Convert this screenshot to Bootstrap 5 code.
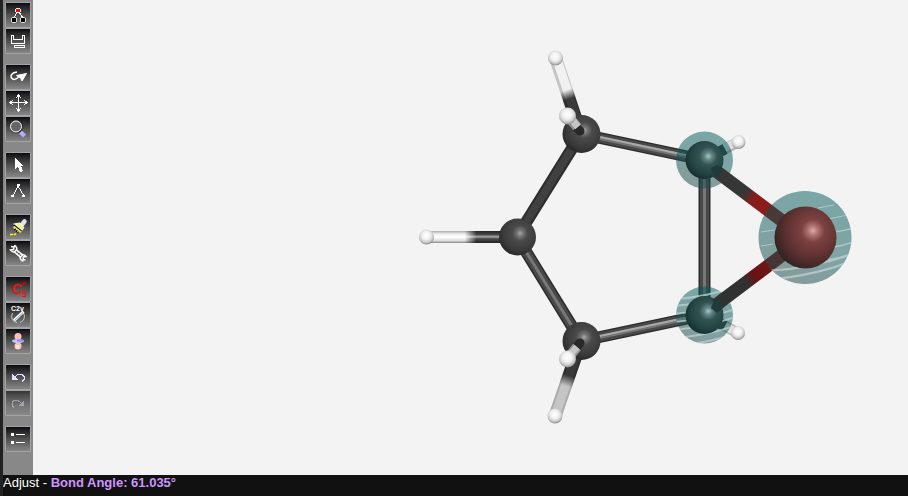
<!DOCTYPE html>
<html lang="en">
<head>
<meta charset="utf-8">
<meta name="viewport" content="width=device-width, initial-scale=1">
<title>Molecule editor</title>
<link href="https://cdn.jsdelivr.net/npm/bootstrap@5.3.0/dist/css/bootstrap.min.css" rel="stylesheet">
<style>
body{font-family:"Liberation Sans",Arial,sans-serif;background:#f3f3f3;border-left:3px solid #222}
.tool-strip{background:#888;padding:2px;gap:10px;width:30px}
.tool-btn{width:26px;height:26px;border:1px solid #a3a3a3;border-radius:1px;background:linear-gradient(#080810 0,#1e1e20 12%,#505050 50%,#7d7d7d 92%,#858585);line-height:0}
.tool-btn svg{width:24px;height:24px;fill:none;stroke:#fff;stroke-width:1}
.tool-btn:disabled{opacity:1;background:linear-gradient(#333 0,#505050 20%,#747474 60%,#888)}
.tool-btn:disabled svg{opacity:.45}
.status-line{background:#111;color:#fff;font-size:13px;line-height:16px;height:21px}
.status-line strong{color:#cf95ff}
.glyph{font-family:"Liberation Sans",Arial,sans-serif;stroke:none}
</style>
<script src="https://cdn.jsdelivr.net/npm/bootstrap@5.3.0/dist/js/bootstrap.bundle.min.js"></script>
</head>
<body class="vh-100 d-flex flex-column overflow-hidden">
<div class="d-flex flex-grow-1 overflow-hidden">
<nav class="tool-strip d-flex flex-column flex-shrink-0" aria-label="Tools">
  <div class="d-flex flex-column">
    <button type="button" class="tool-btn p-0" aria-label="Add fragment"><svg viewBox="1 1 24 24" shape-rendering="crispEdges"><path d="M12 10L9 16M14 10l4 6"/><path d="M11 6h4v1h1v3h-1v1h-4v-1h-1V7h1z" fill="#fff" stroke="none"/><path d="M11 7h4v3h-4z" fill="red" stroke="none"/><path d="M7 15h4v1h1v4h-1v1H7v-1H6v-4h1zM16 15h4v1h1v4h-1v1h-4v-1h-1v-4h1z" fill="#ddd" stroke="none"/><path d="M7 16h4v4H7zM16 16h4v4h-4z" fill="#000" stroke="none"/></svg></button>
    <button type="button" class="tool-btn p-0" aria-label="Add ring"><svg viewBox="1 1 24 24" shape-rendering="crispEdges"><path d="M6.500 7v8.500h13V7h-2v4h-9V7z"/><path d="M9.500 17.500h10v2h-10z"/></svg></button>
  </div>
  <div class="d-flex flex-column">
    <button type="button" class="tool-btn p-0" aria-label="Rotate"><svg viewBox="1 1 24 24"><path d="M12 8C7 8.500 5 11.500 6.500 14c2 2.500 4.500 1.500 7-1" stroke-width="1.500"/><path d="M11.500 11.500L21.500 9.500 17 17 15.500 14z" fill="#fff"/></svg></button>
    <button type="button" class="tool-btn p-0" aria-label="Translate"><svg viewBox="1 1 24 24" shape-rendering="crispEdges"><path d="M13.500 5v16M5 12.500h17M11 8l2.500-3L16 8M11 18l2.500 3 2.500-3M8 10l-3 2.500L8 15M19 10l3 2.500-3 2.500"/></svg></button>
    <button type="button" class="tool-btn p-0" aria-label="Zoom"><svg viewBox="1 1 24 24"><path d="M15.500 16l4 4" stroke="#b1b1ff" stroke-width="4"/><circle cx="11.500" cy="11" r="5.500" stroke="#222" stroke-width="1.500"/><circle cx="11" cy="10.500" r="5.500" fill="#666"/></svg></button>
  </div>
  <div class="d-flex flex-column">
    <button type="button" class="tool-btn p-0" aria-label="Select"><svg viewBox="1 1 24 24" shape-rendering="crispEdges"><path d="M10 6v11l3-3 2 6 3-1-2-5h3z" fill="#fff" stroke="none"/></svg></button>
    <button type="button" class="tool-btn p-0" aria-label="Adjust"><svg viewBox="1 1 24 24" shape-rendering="crispEdges"><path d="M13 8L8 18M13 8l6 10"/><path d="M12 6h3v2h-3zM6 17h3v2H6zM17 17h3v2h-3z" fill="#fff" stroke="none"/></svg></button>
  </div>
  <div class="d-flex flex-column">
    <button type="button" class="tool-btn p-0" aria-label="Clean structure"><svg viewBox="1 1 24 24"><path d="M17 10.500l2.500-3" stroke="#dce0ea" stroke-width="4.500" stroke-linecap="round"/><path d="M8.500 9.500l6-1 5 5-3.500 5-4-.5-3.500-4z" fill="#f5f5f5" stroke="none"/><path d="M8.500 11l8 6.500" stroke="#111" stroke-width="2"/><path d="M9 12.500l7 5.500M12.500 9.500l5 5.500" stroke="#fff12e" stroke-width="1.500"/><path d="M9.500 15l4 3.500" stroke="#111" stroke-width="2" stroke-dasharray="1.500 .7"/><path d="M5 20.500h5l1.500-1.500" stroke="#ffef00" stroke-width="1.500" stroke-dasharray="3 .5"/></svg></button>
    <button type="button" class="tool-btn p-0" aria-label="Optimize"><svg viewBox="1 1 24 24"><path d="M10 10.500l7 6" stroke="#fff" stroke-width="4.500"/><path d="M6 6.500l3 .5-.5 2.500L5.500 10c2 2.500 4 2.500 5.500.500 1.500-2 .500-4.500-2-5M20.500 20l-2.500-.5.5-2.500 2.500-.500c-2-2.500-4.500-2-5.500 0-1 2 1 5 3 4.500" stroke-width="1.500"/><path d="M11 11.500l5 4" stroke="#444" stroke-width="1.500" stroke-dasharray="2 .7"/></svg></button>
  </div>
  <div class="d-flex flex-column">
    <button type="button" class="tool-btn p-0" aria-label="Symmetry element"><svg viewBox="1 1 24 24"><text class="glyph" x="7" y="18" font-size="14" fill="#f01010" style="stroke:#f01010;stroke-width:.5">C</text><path d="M20.500 15.500h-3v2h3v3h-3.500" stroke="#f01010" stroke-width="1" shape-rendering="crispEdges"/><path d="M17 7.500h4M19 5.500v4M17.500 9l3-3" stroke="#d00"/></svg></button>
    <button type="button" class="tool-btn p-0" aria-label="Symmetrize to C2v"><svg viewBox="1 1 24 24"><text class="glyph" x="6" y="9" font-size="7" font-weight="bold" fill="#fff">C2v</text><path d="M7.500 11c-2 5 0 9 4.500 9.500M18.500 11c2 4 .500 8-3.500 9.500" stroke="#ccc"/><path d="M9 18.500L18.500 9.500" stroke="#fff" stroke-width="3"/><path d="M9.500 18.500L18 10.500" stroke="#8fa5ad"/></svg></button>
    <button type="button" class="tool-btn p-0" aria-label="Orbitals"><svg viewBox="1 1 24 24"><g stroke="none"><circle cx="13" cy="8.500" r="3.500" fill="#ffc0ba"/><circle cx="13" cy="18" r="3.500" fill="#ffc0ba"/><circle cx="12.500" cy="19" r="2" fill="#ffe6e2"/><ellipse cx="13" cy="13" rx="6" ry="2" fill="#c0c6ff"/><path d="M12 11.500h6v2h-6z" fill="#858cf0"/></g></svg></button>
  </div>
  <div class="d-flex flex-column">
    <button type="button" class="tool-btn p-0" aria-label="Undo"><svg viewBox="1 1 24 24" shape-rendering="crispEdges"><path d="M9 13.500l4-3h4l2 2v3l-2 2" stroke="#e3e3ff"/><path d="M7 10l6 6H7z" fill="#e3e3ff" stroke="none"/></svg></button>
    <button type="button" class="tool-btn p-0" aria-label="Redo" disabled><svg viewBox="1 1 24 24" shape-rendering="crispEdges"><path d="M17 13.500l-4-3H9l-2 2v3l2 2" stroke="#e3e3ff"/><path d="M19 10l-6 6h6z" fill="#e3e3ff" stroke="none"/></svg></button>
  </div>
  <div class="d-flex flex-column">
    <button type="button" class="tool-btn p-0" aria-label="Options"><svg viewBox="1 1 24 24" shape-rendering="crispEdges"><path d="M6 7h3v3H6zM6 15h3v3H6zM11 8h9v1h-9zM11 16h9v1h-9z" fill="#fff" stroke="none"/></svg></button>
  </div>
</nav>
<main class="flex-grow-1 overflow-hidden">
<svg class="d-block w-100 h-100" viewBox="33 0 875 475" role="img" aria-label="Ball and stick molecule">
<defs>
  <radialGradient id="carbon" cx=".57" cy=".4" r=".62"><stop offset="0" stop-color="#aaa"/><stop offset=".13" stop-color="#777"/><stop offset=".34" stop-color="#4a4a4a"/><stop offset=".75" stop-color="#3a3a3a"/><stop offset="1" stop-color="#282828"/></radialGradient>
  <radialGradient id="picked" cx=".6" cy=".4" r=".62"><stop offset="0" stop-color="#a9c9c9"/><stop offset=".16" stop-color="#648585"/><stop offset=".38" stop-color="#335353"/><stop offset=".75" stop-color="#234343"/><stop offset="1" stop-color="#183030"/></radialGradient>
  <radialGradient id="oxygen" cx=".62" cy=".39" r=".66"><stop offset="0" stop-color="#dda9a9"/><stop offset=".12" stop-color="#b07272"/><stop offset=".28" stop-color="#7c4141"/><stop offset=".65" stop-color="#5e3131"/><stop offset="1" stop-color="#342222"/></radialGradient>
  <radialGradient id="hydrogen" cx=".48" cy=".4" r=".6"><stop offset="0" stop-color="#fff"/><stop offset=".45" stop-color="#f1f1f1"/><stop offset=".75" stop-color="#ccc"/><stop offset="1" stop-color="#888"/></radialGradient>
  <linearGradient id="halo" x1=".7" y1="0" x2=".3" y2="1"><stop offset="0" stop-color="#00595a" stop-opacity=".5"/><stop offset=".55" stop-color="#0a5555" stop-opacity=".5"/><stop offset="1" stop-color="#244a4a" stop-opacity=".53"/></linearGradient>
  <linearGradient id="tube" x1="0" x2="0" y1="0" y2="1"><stop offset="0" stop-color="#aaa"/><stop offset=".25" stop-color="#eee"/><stop offset=".5" stop-color="#fff"/><stop offset=".8" stop-color="#ddd"/><stop offset="1" stop-color="#888"/></linearGradient>
  <linearGradient id="darktube" x1="0" x2="0" y1="0" y2="1"><stop offset="0" stop-color="#222"/><stop offset=".3" stop-color="#484848"/><stop offset=".48" stop-color="#aaa"/><stop offset=".65" stop-color="#484848"/><stop offset="1" stop-color="#222"/></linearGradient>
  <linearGradient id="fade"><stop offset="0" stop-color="#fff"/><stop offset=".42" stop-color="#fff"/><stop offset=".55" stop-color="#000"/></linearGradient>
  <mask id="fadeMask" maskUnits="userSpaceOnUse" x="426" y="225" width="92" height="24"><rect x="426" y="225" width="92" height="24" fill="url(#fade)"/></mask>
  <linearGradient id="upH" gradientUnits="userSpaceOnUse" x1="555" y1="58" x2="581" y2="134"><stop offset=".42" stop-color="#f1f1f1"/><stop offset=".54" stop-color="#3a3a3a"/></linearGradient>
  <linearGradient id="upHEdge" gradientUnits="userSpaceOnUse" x1="555" y1="58" x2="581" y2="134"><stop offset=".42" stop-color="#c4c4c4"/><stop offset=".54" stop-color="#2d2d2d"/></linearGradient>
  <linearGradient id="lowH" gradientUnits="userSpaceOnUse" x1="555" y1="416" x2="581" y2="341"><stop offset=".4" stop-color="#c5c5c5"/><stop offset=".54" stop-color="#383838"/></linearGradient>
  <linearGradient id="lowHEdge" gradientUnits="userSpaceOnUse" x1="555" y1="416" x2="581" y2="341"><stop offset=".4" stop-color="#acacac"/><stop offset=".54" stop-color="#2f2f2f"/></linearGradient>
  <linearGradient id="topO" gradientUnits="userSpaceOnUse" x1="715" y1="170" x2="805" y2="238"><stop offset=".34" stop-color="#363636"/><stop offset=".42" stop-color="#891c1c"/><stop offset=".7" stop-color="#8b1c1c"/></linearGradient>
  <linearGradient id="lowO" gradientUnits="userSpaceOnUse" x1="715" y1="306" x2="805" y2="238"><stop offset=".34" stop-color="#313131"/><stop offset=".44" stop-color="#681313"/><stop offset=".7" stop-color="#7a1919"/></linearGradient>
  <clipPath id="clipO"><circle cx="805" cy="237.500" r="46.500"/></clipPath>
  <clipPath id="clipC"><circle cx="704.500" cy="315" r="28.500"/></clipPath>
</defs>
<g fill="none">
  <g id="side-hydrogens">
    <path d="M738 142L704 160M738 333L704 315" stroke="#b5b5b5" stroke-width="11"/>
    <path d="M738 141L704 159M738 333L704 315" stroke="#e2e2e2" stroke-width="8"/>
    <path d="M725 149L704 160M725 326L704 315" stroke="#383838" stroke-width="11"/>
    <circle cx="738.500" cy="142" r="7" fill="url(#hydrogen)"/><circle cx="738" cy="333" r="7" fill="url(#hydrogen)"/>
  </g>
  <path d="M555.500 58L581 134" stroke="url(#upHEdge)" stroke-width="13"/><path d="M556.500 58L582 134" stroke="url(#upH)" stroke-width="9"/>
  <path d="M555 416L581 341" stroke="url(#lowHEdge)" stroke-width="13"/><path d="M555 416L581 341" stroke="url(#lowH)" stroke-width="9"/>
  <path d="M427 231h91v12h-91z" fill="url(#darktube)"/><path d="M427 231h91v12h-91z" fill="url(#tube)" mask="url(#fadeMask)"/>
  <path d="M581 134L517 237" stroke="#2d2d2d" stroke-width="12"/><path d="M581 134L517 237" stroke="#404040" stroke-width="8"/>
  <path d="M517 237L581 341M581 341L704 315M581 134L704 160M704.500 160V315" stroke="#2d2d2d" stroke-width="12"/>
  <path d="M517 237L581 341M581 341L704 315M581 134L704 160M704.500 160V315" stroke="#484848" stroke-width="9"/>
  <path d="M517 237L581 341M704.500 160V315" stroke="#777" stroke-width="3"/>
  <path d="M581 341L704 315M581 134L704 160" stroke="#737373" stroke-width="4"/>
  <path d="M581 340L704 314M581 133L704 159" stroke="#a9a9a9" stroke-width="2"/>
  <circle cx="555.500" cy="58" r="7.500" fill="url(#hydrogen)"/><circle cx="426.500" cy="237" r="7.500" fill="url(#hydrogen)"/><circle cx="555" cy="416" r="7.500" fill="url(#hydrogen)"/>
  <circle cx="581.500" cy="134" r="19" fill="url(#carbon)"/><circle cx="517.500" cy="237" r="18.500" fill="url(#carbon)"/><circle cx="581.500" cy="341" r="19" fill="url(#carbon)"/>
  <path d="M580 131L574 125M580 343L575 349" stroke="#292929" stroke-width="9" stroke-linecap="round"/>
  <path d="M568 116L577 127M568 358L577 347" stroke="#929292" stroke-width="10"/><path d="M569 116L578 127M568 357L577 347" stroke="#c5c5c5" stroke-width="7"/>
  <circle cx="567.500" cy="116" r="8.500" fill="url(#hydrogen)"/><circle cx="567.500" cy="359" r="8.500" fill="url(#hydrogen)"/>
  <circle cx="704.500" cy="160" r="28.500" fill="url(#halo)"/><circle cx="704.500" cy="315" r="28.500" fill="url(#halo)"/>
  <path clip-path="url(#clipC)" d="M676 299q30-2 58-12M674 306q32-2 62-13M674 314q34-3 64-14M674 322q34-3 64-14M674 330q34-3 64-14M676 338q34-3 64-14M680 345q30-2 56-12" stroke="#bdd0d0" stroke-opacity=".75" stroke-width="2"/>
  <circle cx="704.500" cy="160" r="19" fill="url(#picked)"/><circle cx="704.500" cy="315" r="19" fill="url(#picked)"/>
  <path d="M716 171L805 238" stroke="url(#topO)" stroke-width="13"/><path d="M716 305L805 238" stroke="url(#lowO)" stroke-width="13"/>
  <path d="M711 168q1 7 7 10l5-9-6-4zM711 308q2-7 7-10l6 9-7 6z" fill="#213b3b"/>
  <circle cx="805" cy="237.500" r="46.500" fill="url(#halo)"/>
  <g clip-path="url(#clipO)" stroke="#bdcfcf" stroke-opacity=".8">
    <path d="M761 232l13-2M818 208l16-3M828 219l20-4M761 246l12-2" stroke-width="1"/>
    <path d="M834 232q10-1 20-4M834 247q12-2 22-6" stroke-width="1.500"/>
    <path d="M828 260q14-2 26-7M766 271q45-2 86-17M776 279q42-5 70-16" stroke-width="2"/>
  </g>
  <circle cx="805.500" cy="237.500" r="31" fill="url(#oxygen)"/>
</g>
</svg>
</main>
</div>
<footer class="status-line flex-shrink-0 text-nowrap" role="status">Adjust - <strong>Bond Angle: 61.035°</strong></footer>
</body>
</html>
